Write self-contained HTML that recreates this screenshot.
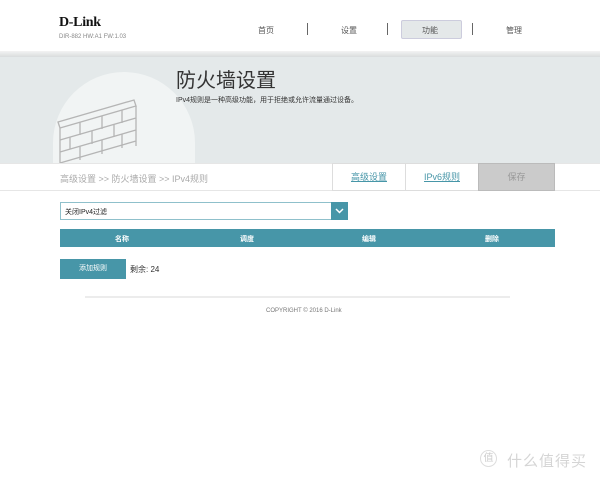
<!DOCTYPE html>
<html><head><meta charset="utf-8"><style>
*{margin:0;padding:0;box-sizing:border-box}
body{width:600px;height:477px;background:#fff;font-family:"Liberation Sans","Noto Sans CJK SC",sans-serif;position:relative;overflow:hidden;color:#333}
.a{position:absolute}
</style></head><body>
<div class="a" style="left:59px;top:15px;font-family:'Liberation Serif',serif;font-weight:bold;font-size:14px;color:#111;letter-spacing:-0.3px">D-Link</div>
<div class="a" style="left:59px;top:34px;font-size:6px;color:#888">DIR-882 HW:A1 FW:1.03</div>
<div class="a" style="left:258px;top:25px;font-size:8px;color:#555">首页</div>
<div class="a" style="left:307px;top:23px;width:1px;height:12px;background:#666"></div>
<div class="a" style="left:341px;top:25px;font-size:8px;color:#555">设置</div>
<div class="a" style="left:387px;top:23px;width:1px;height:12px;background:#666"></div>
<div class="a" style="left:401px;top:20px;width:61px;height:19px;background:#e4e8e9;border:1px solid #ccd;border-radius:2px"></div>
<div class="a" style="left:422px;top:25px;font-size:8px;color:#555">功能</div>
<div class="a" style="left:472px;top:23px;width:1px;height:12px;background:#666"></div>
<div class="a" style="left:506px;top:25px;font-size:8px;color:#555">管理</div>
<div class="a" style="left:0;top:51px;width:600px;height:6px;background:linear-gradient(#f3f3f3,#d9dcdd)"></div>
<div class="a" style="left:0;top:57px;width:600px;height:106px;background:#e4e9ea"></div>
<div class="a" style="left:53px;top:72px;width:142px;height:91px;border-radius:71px 71px 0 0;background:#f1f4f4"></div>
<svg class="a" style="left:56px;top:96px" width="86" height="67"><g fill="none" stroke="#b5b5b5" stroke-width="1.3"><path d="M2 26 L78 4 L80 10 L4 32 Z"/><path d="M4 32 V67 M80 10 V50 M4 44 L80 22 M4 56 L80 34 M4 67 L80 45 M24 26 V39 M46 20 V33 M66 14 V27 M14 41 V53 M36 35 V48 M58 28 V41 M24 50 V64 M46 44 V58 M66 38 V52"/></g></svg>
<div class="a" style="left:176px;top:64px;font-size:20px;color:#333">防火墙设置</div>
<div class="a" style="left:176px;top:95px;font-size:7px;color:#333">IPv4规则是一种高级功能，用于拒绝或允许流量通过设备。</div>
<div class="a" style="left:0;top:163px;width:600px;height:28px;background:#fff;border-top:1px solid #e6e6e6;border-bottom:1px solid #e6e6e6"></div>
<div class="a" style="left:60px;top:172px;font-size:9px;color:#aaa">高级设置 &gt;&gt; 防火墙设置 &gt;&gt; IPv4规则</div>
<div class="a" style="left:332px;top:163px;width:74px;height:28px;border:1px solid #ddd;font-size:9px;color:#4796a8;text-decoration:underline;text-align:center;line-height:27px">高级设置</div>
<div class="a" style="left:405px;top:163px;width:74px;height:28px;border:1px solid #ddd;font-size:9px;color:#4796a8;text-decoration:underline;text-align:center;line-height:27px">IPv6规则</div>
<div class="a" style="left:478px;top:163px;width:77px;height:28px;background:#cbcbcb;border:1px solid #bbb;font-size:9px;color:#999;text-align:center;line-height:27px">保存</div>
<div class="a" style="left:60px;top:202px;width:287px;height:18px;border:1px solid #8fc0cb"></div>
<div class="a" style="left:65px;top:207px;font-size:7px;color:#222">关闭IPv4过滤</div>
<div class="a" style="left:331px;top:202px;width:17px;height:18px;background:#4796a8"></div>
<svg class="a" style="left:334px;top:206px" width="11" height="10"><path d="M2 3 L5.5 6.5 L9 3" stroke="#fff" stroke-width="1.5" fill="none"/></svg>
<div class="a" style="left:60px;top:229px;width:495px;height:18px;background:#4796a8"></div>
<div class="a" style="left:115px;top:234px;font-size:7px;color:#fff;font-weight:bold">名称</div>
<div class="a" style="left:240px;top:234px;font-size:7px;color:#fff;font-weight:bold">调度</div>
<div class="a" style="left:362px;top:234px;font-size:7px;color:#fff;font-weight:bold">编辑</div>
<div class="a" style="left:485px;top:234px;font-size:7px;color:#fff;font-weight:bold">删除</div>
<div class="a" style="left:60px;top:259px;width:66px;height:20px;background:#4796a8;color:#fff;font-size:7px;text-align:center;line-height:20px">添加规则</div>
<div class="a" style="left:130px;top:264px;font-size:8px;color:#333">剩余: 24</div>
<div class="a" style="left:85px;top:296px;width:425px;height:2px;background:#ececec"></div>
<div class="a" style="left:266px;top:308px;font-size:6px;color:#777">COPYRIGHT © 2016 D-Link</div>
<div class="a" style="left:480px;top:450px;width:17px;height:17px;border:1px solid #ddd;border-radius:50%;font-size:10px;color:#ccc;text-align:center;line-height:15px">值</div>
<div class="a" style="left:507px;top:450px;font-size:15px;color:#d5d5d5;letter-spacing:1px">什么值得买</div>
</body></html>
